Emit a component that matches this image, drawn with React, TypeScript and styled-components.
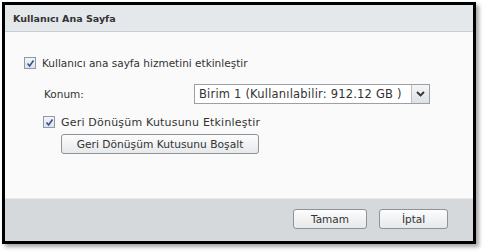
import React, { useState } from "react";
import styled, { createGlobalStyle } from "styled-components";

const GlobalStyle = createGlobalStyle`
	html, body {
		margin: 0;
		padding: 0;
		background: #fff;
	}
	body {
		font-family: "DejaVu Sans", Tahoma, sans-serif;
		font-size: 10.5px;
		color: #333;
	}
`;

const Page = styled.div`
	width: 484px;
	height: 252px;
	padding: 2px 0 0 2px;
	box-sizing: border-box;
`;

const Dialog = styled.div`
	width: 474px;
	height: 242px;
	box-sizing: border-box;
	border: 3px solid #000;
	box-shadow: 3px 3px 4px rgba(0, 0, 0, 0.35);
	display: flex;
	flex-direction: column;
	background: #fafafa;
`;

const Header = styled.div`
	height: 26px;
	flex: none;
	display: flex;
	align-items: center;
	padding-left: 8px;
	background: #e5e8eb;
	border-bottom: 1px solid #c9cdd1;
	font-weight: bold;
	font-size: 9.5px;
	color: #333;
`;

const Body = styled.div`
	flex: 1;
	display: flex;
	flex-direction: column;
	padding: 23px 0 0 19px;
	background: #fafafa;
`;

const CheckRow = styled.label<{ indent?: number; top?: number; wide?: boolean }>`
	display: flex;
	align-items: center;
	gap: 6px;
	height: 16px;
	margin-left: ${({ indent }) => indent ?? 0}px;
	margin-top: ${({ top }) => top ?? 0}px;
	font-size: ${({ wide }) => (wide ? "11px" : "10.5px")};
	letter-spacing: ${({ wide }) => (wide ? "0.2px" : "0")};
	cursor: pointer;
`;

const Box = styled.span`
	width: 10px;
	height: 10px;
	border: 1px solid #8e9aa6;
	background: linear-gradient(#f2f4f6, #dfe4e9);
	display: flex;
	align-items: center;
	justify-content: center;
	flex: none;
`;

const FieldRow = styled.div`
	display: flex;
	align-items: center;
	height: 20px;
	margin-top: 13px;
	padding-left: 20px;
`;

const Label = styled.span`
	width: 150px;
`;

const Select = styled.div`
	width: 236px;
	height: 20px;
	box-sizing: border-box;
	border: 1px solid #9aa0a6;
	background: #fff;
	display: flex;
	align-items: center;
	padding-left: 4px;
`;

const SelectText = styled.span`
	flex: 1;
	font-size: 11.5px;
	letter-spacing: 0.2px;
	white-space: nowrap;
`;

const Arrow = styled.span`
	width: 17px;
	height: 18px;
	flex: none;
	border-left: 1px solid #b8bec4;
	background: linear-gradient(#f4f5f6, #dde1e5);
	display: flex;
	align-items: center;
	justify-content: center;
`;

const Button = styled.button<{ w: number }>`
	width: ${({ w }) => w}px;
	height: 20px;
	box-sizing: border-box;
	border: 1px solid #8d9399;
	border-radius: 3px;
	background: linear-gradient(#fdfdfd, #e6e8ea);
	font-family: "DejaVu Sans", Tahoma, sans-serif;
	font-size: 10.5px;
	color: #333;
	padding: 0;
`;

const BodyButton = styled(Button)`
	align-self: flex-start;
	margin-left: 37px;
	margin-top: 4px;
	font-size: 10.7px;
`;

const Footer = styled.div`
	height: 43px;
	flex: none;
	background: #d5d9dc;
	border-top: 1px solid #e6e8ea;
	display: flex;
	justify-content: flex-end;
	align-items: center;
	gap: 12px;
	padding-right: 25px;
	padding-bottom: 2px;
	box-sizing: border-box;
`;

function Check({ on }: { on: boolean }) {
	return (
		<Box>
			{on && (
				<svg width="9" height="9" viewBox="0 0 9 9">
					<path d="M1.5 4.5 L3.6 7 L7.5 1.5" fill="none" stroke="#3a4f9a" strokeWidth="1.6" />
				</svg>
			)}
		</Box>
	);
}

export default function App() {
	const [home, setHome] = useState(true);
	const [bin, setBin] = useState(true);
	return (
		<>
			<GlobalStyle />
			<Page>
				<Dialog>
					<Header>Kullanıcı Ana Sayfa</Header>
					<Body>
						<CheckRow onClick={() => setHome(!home)}>
							<Check on={home} />
							Kullanıcı ana sayfa hizmetini etkinleştir
						</CheckRow>
						<FieldRow>
							<Label>Konum:</Label>
							<Select>
								<SelectText>Birim 1 (Kullanılabilir: 912.12 GB )</SelectText>
								<Arrow>
									<svg width="9" height="6" viewBox="0 0 9 6">
										<path d="M1 1 L4.5 4.5 L8 1" fill="none" stroke="#333" strokeWidth="1.8" />
									</svg>
								</Arrow>
							</Select>
						</FieldRow>
						<CheckRow indent={19} top={10} wide onClick={() => setBin(!bin)}>
							<Check on={bin} />
							Geri Dönüşüm Kutusunu Etkinleştir
						</CheckRow>
						<BodyButton w={198}>Geri Dönüşüm Kutusunu Boşalt</BodyButton>
					</Body>
					<Footer>
						<Button w={74}>Tamam</Button>
						<Button w={69}>İptal</Button>
					</Footer>
				</Dialog>
			</Page>
		</>
	);
}
